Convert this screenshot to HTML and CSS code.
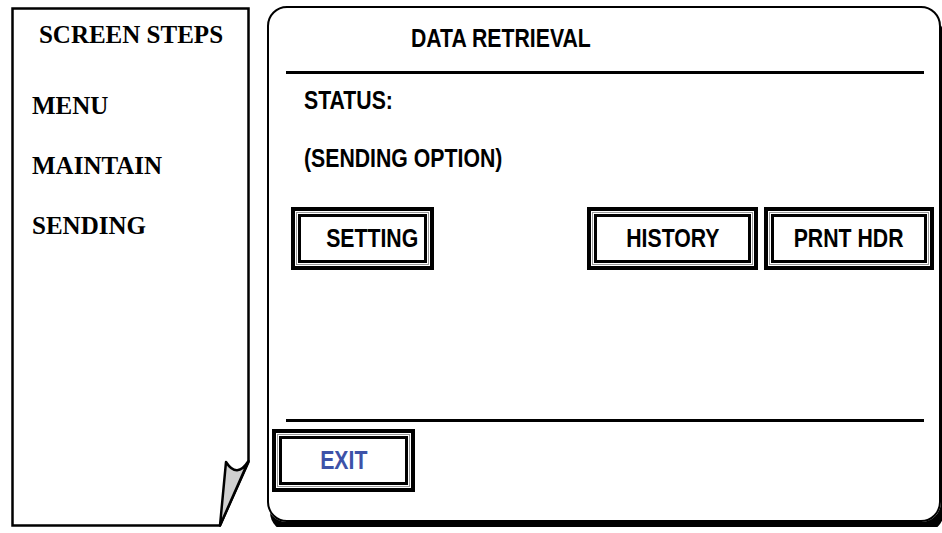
FILE: index.html
```html
<!DOCTYPE html>
<html lang="en">
<head>
    <meta charset="UTF-8">
    <meta name="viewport" content="width=device-width, initial-scale=1.0">
    <title>Data Retrieval</title>
    <link rel="stylesheet" href="styles.css">
</head>
<body>

<div class="page">

  <!-- left note: the list of screen steps, with its folded corner -->
  <aside class="steps">
    <svg class="steps-outline" width="240" height="520" viewBox="0 0 240 520">
      <path d="M1.5 1.5 H237.5 V455 L209 518.5 H1.5 Z" fill="#fff" stroke="#000" stroke-width="2.5"/>
      <path d="M215 455 Q226 472 237.5 454 L209 518.5 Z" fill="#d0d0d0" stroke="#000" stroke-width="2.5" stroke-linejoin="round"/>
    </svg>
    <h2 class="steps-title">SCREEN STEPS</h2>
    <ul class="steps-list">
      <li>MENU</li>
      <li>MAINTAIN</li>
      <li>SENDING</li>
    </ul>
  </aside>

  <!-- the terminal screen itself -->
  <main class="screen">
    <h1 class="screen-title"><span class="narrow">DATA RETRIEVAL</span></h1>
    <div class="rule"></div>

    <p class="status"><span class="narrow">STATUS:</span></p>
    <p class="status option"><span class="narrow">(SENDING OPTION)</span></p>

    <div class="buttons">
      <button class="btn btn-setting"><span class="narrow">SETTING</span></button>
      <button class="btn btn-history"><span class="narrow">HISTORY</span></button>
      <button class="btn btn-print"><span class="narrow">PRNT HDR</span></button>
    </div>

    <div class="rule rule-bottom"></div>
    <button class="btn btn-exit"><span class="narrow">EXIT</span></button>
  </main>

</div>

</body>
</html>
```

FILE: styles.css
```css
body {
    margin: 0;
    background-color: #fff;
    font-family: "Liberation Sans", Arial, sans-serif;
    font-weight: bold;
    color: #000;
}

.page {
    display: flex;
    gap: 16px;
    padding: 6px 0 0 11px;
}

/* no narrow face installed, so squeeze the bold sans */
.narrow {
    display: inline-block;
    transform: scaleX(0.85);
    transform-origin: left center;
    white-space: nowrap;
}

/* left note */
.steps {
    position: relative;
    width: 240px;
    height: 520px;
    margin-top: 1px;
    flex-shrink: 0;
    font-family: "Liberation Serif", "Times New Roman", serif;
    font-size: 25px;
    line-height: 30px;
}

.steps-outline {
    position: absolute;
    top: 0;
    left: 0;
}

.steps-title {
    position: relative;
    margin: 0;
    padding-top: 13px;
    font-size: 25px;
    text-align: center;
}

.steps-list {
    position: relative;
    list-style: none;
    margin: 41px 0 0 0;
    padding: 0 0 0 21px;
}

.steps-list li {
    margin-bottom: 30px;
}

/* main screen */
.screen {
    box-sizing: border-box;
    width: 674px;
    height: 516px;
    border: 2px solid #000;
    border-radius: 20px;
    box-shadow: 3px 10px 0 #000;
    font-size: 25px;
    line-height: 30px;
}

.screen-title {
    margin: 0;
    padding: 15px 0 0 142px;
    font-size: 25px;
}

.rule {
    height: 3px;
    margin: 18px 15px 0 17px;
    background-color: #000;
}

.rule-bottom {
    margin-top: 149px;
}

.status {
    margin: 11px 0 0 0;
    padding-left: 35px;
}

.status.option {
    margin-top: 28px;
}

.buttons {
    display: flex;
    gap: 6px;
    margin-top: 34px;
    padding: 0 5px 0 22px;
}

.btn {
    box-sizing: border-box;
    height: 63px;
    padding: 0;
    border: 4px solid #000;
    background-color: #fff;
    box-shadow: inset 0 0 0 1px #fff, inset 0 0 0 2px #999, inset 0 0 0 3px #fff, inset 0 0 0 6px #000;
    font-family: inherit;
    font-weight: bold;
    font-size: 25px;
    color: #000;
}

.btn .narrow {
    transform-origin: center center;
}

.btn-setting {
    width: 143px;
    padding-left: 19px;
}

.btn-history {
    width: 171px;
    margin-left: auto;
}

.btn-print {
    width: 170px;
}

.btn-exit {
    display: block;
    width: 143px;
    margin: 7px 0 0 3px;
    color: #3d52a8;
}
```
